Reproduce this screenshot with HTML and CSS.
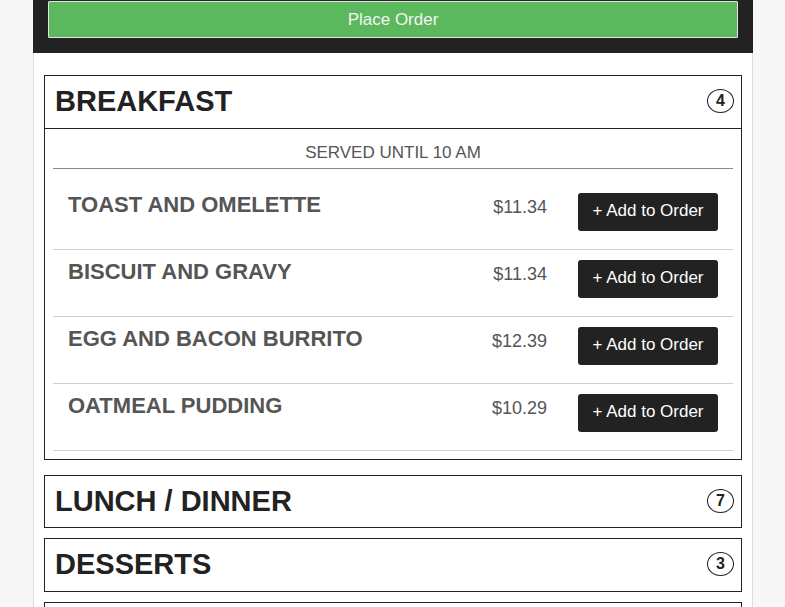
FILE: index.html
```html
<!DOCTYPE html>
<html lang="en">
<head>
<meta charset="utf-8">
<title>Menu</title>
<link rel="stylesheet" href="styles.css">
</head>
<body>
<div class="page">
  <div class="order-bar">
    <button class="place-order">Place Order</button>
  </div>
  <div class="content">
    <section class="panel open">
      <div class="panel-head">
        <h2 class="panel-title">BREAKFAST</h2>
        <span class="badge">4</span>
      </div>
      <div class="panel-body">
        <p class="served">SERVED UNTIL 10 AM</p>
        <ul class="items">
          <li class="item">
            <span class="item-name">TOAST AND OMELETTE</span>
            <span class="item-price">$11.34</span>
            <button class="add-btn">+ Add to Order</button>
          </li>
          <li class="item">
            <span class="item-name">BISCUIT AND GRAVY</span>
            <span class="item-price">$11.34</span>
            <button class="add-btn">+ Add to Order</button>
          </li>
          <li class="item">
            <span class="item-name">EGG AND BACON BURRITO</span>
            <span class="item-price">$12.39</span>
            <button class="add-btn">+ Add to Order</button>
          </li>
          <li class="item">
            <span class="item-name">OATMEAL PUDDING</span>
            <span class="item-price">$10.29</span>
            <button class="add-btn">+ Add to Order</button>
          </li>
        </ul>
      </div>
    </section>
    <section class="panel">
      <div class="panel-head">
        <h2 class="panel-title">LUNCH / DINNER</h2>
        <span class="badge">7</span>
      </div>
    </section>
    <section class="panel">
      <div class="panel-head">
        <h2 class="panel-title">DESSERTS</h2>
        <span class="badge">3</span>
      </div>
    </section>
    <section class="panel">
      <div class="panel-head"></div>
    </section>
  </div>
</div>
</body>
</html>
```

FILE: styles.css
```css
html, body {
  margin: 0;
  padding: 0;
  background: #f7f7f7;
  font-family: "Liberation Sans", Arial, sans-serif;
  color: #222;
}

.page {
  width: 720px;
  margin-left: 33px;
  height: 607px;
  overflow: hidden;
}

.order-bar {
  background: #222;
  padding: 1px 15px 15px;
}

.place-order {
  display: block;
  width: 100%;
  height: 37px;
  margin: 0;
  padding: 0 0 1px;
  background: #5cb85c;
  border: 1px solid #e4e4e4;
  border-radius: 1px;
  color: #f4f4f4;
  font-family: inherit;
  font-size: 17px;
  line-height: 19px;
  text-align: center;
}

.content {
  background: #fff;
  border-left: 1px solid #dcdcdc;
  border-right: 1px solid #dcdcdc;
  padding: 22px 10px 0;
  min-height: 600px;
}

.panel {
  border: 1px solid #222;
  margin-bottom: 10px;
}

.panel.open {
  margin-bottom: 15px;
}

.panel-head {
  height: 51.4px;
  box-sizing: border-box;
  display: flex;
  align-items: center;
  justify-content: space-between;
  padding: 0 7px 2px 10px;
}

.panel.open .panel-head {
  border-bottom: 1px solid #222;
  height: 53px;
}

.panel-title {
  margin: 0;
  font-size: 29px;
  font-weight: bold;
  line-height: 32px;
  color: #222;
}

.badge {
  box-sizing: border-box;
  width: 27px;
  height: 24px;
  border: 1px solid #222;
  border-radius: 50%;
  display: flex;
  align-items: center;
  justify-content: center;
  font-size: 16px;
  font-weight: bold;
  color: #222;
  line-height: 1;
}

.panel-body {
  padding: 8px 8px 8px;
}

.served {
  margin: 0;
  padding: 6px 0 6px;
  line-height: 19px;
  font-size: 17px;
  color: #555;
  text-align: center;
  border-bottom: 1px solid #8a8a8a;
}

.items {
  list-style: none;
  margin: 14px 0 0;
  padding: 0;
}

.item {
  display: flex;
  align-items: flex-start;
  padding: 10px 15px 18px;
  border-bottom: 1px solid #cfcfcf;
}

.item-name {
  flex: 1;
  font-size: 22px;
  font-weight: bold;
  line-height: 24px;
  color: #555;
}

.item-price {
  margin-top: 4px;
  margin-right: 31px;
  font-size: 18px;
  line-height: 20px;
  color: #555;
}

.add-btn {
  width: 140px;
  height: 38px;
  margin: 0;
  padding: 0 0 3px;
  border: none;
  border-radius: 3px;
  background: #222;
  color: #fff;
  font-family: inherit;
  font-size: 17px;
  line-height: 19px;
  text-align: center;
}
```
